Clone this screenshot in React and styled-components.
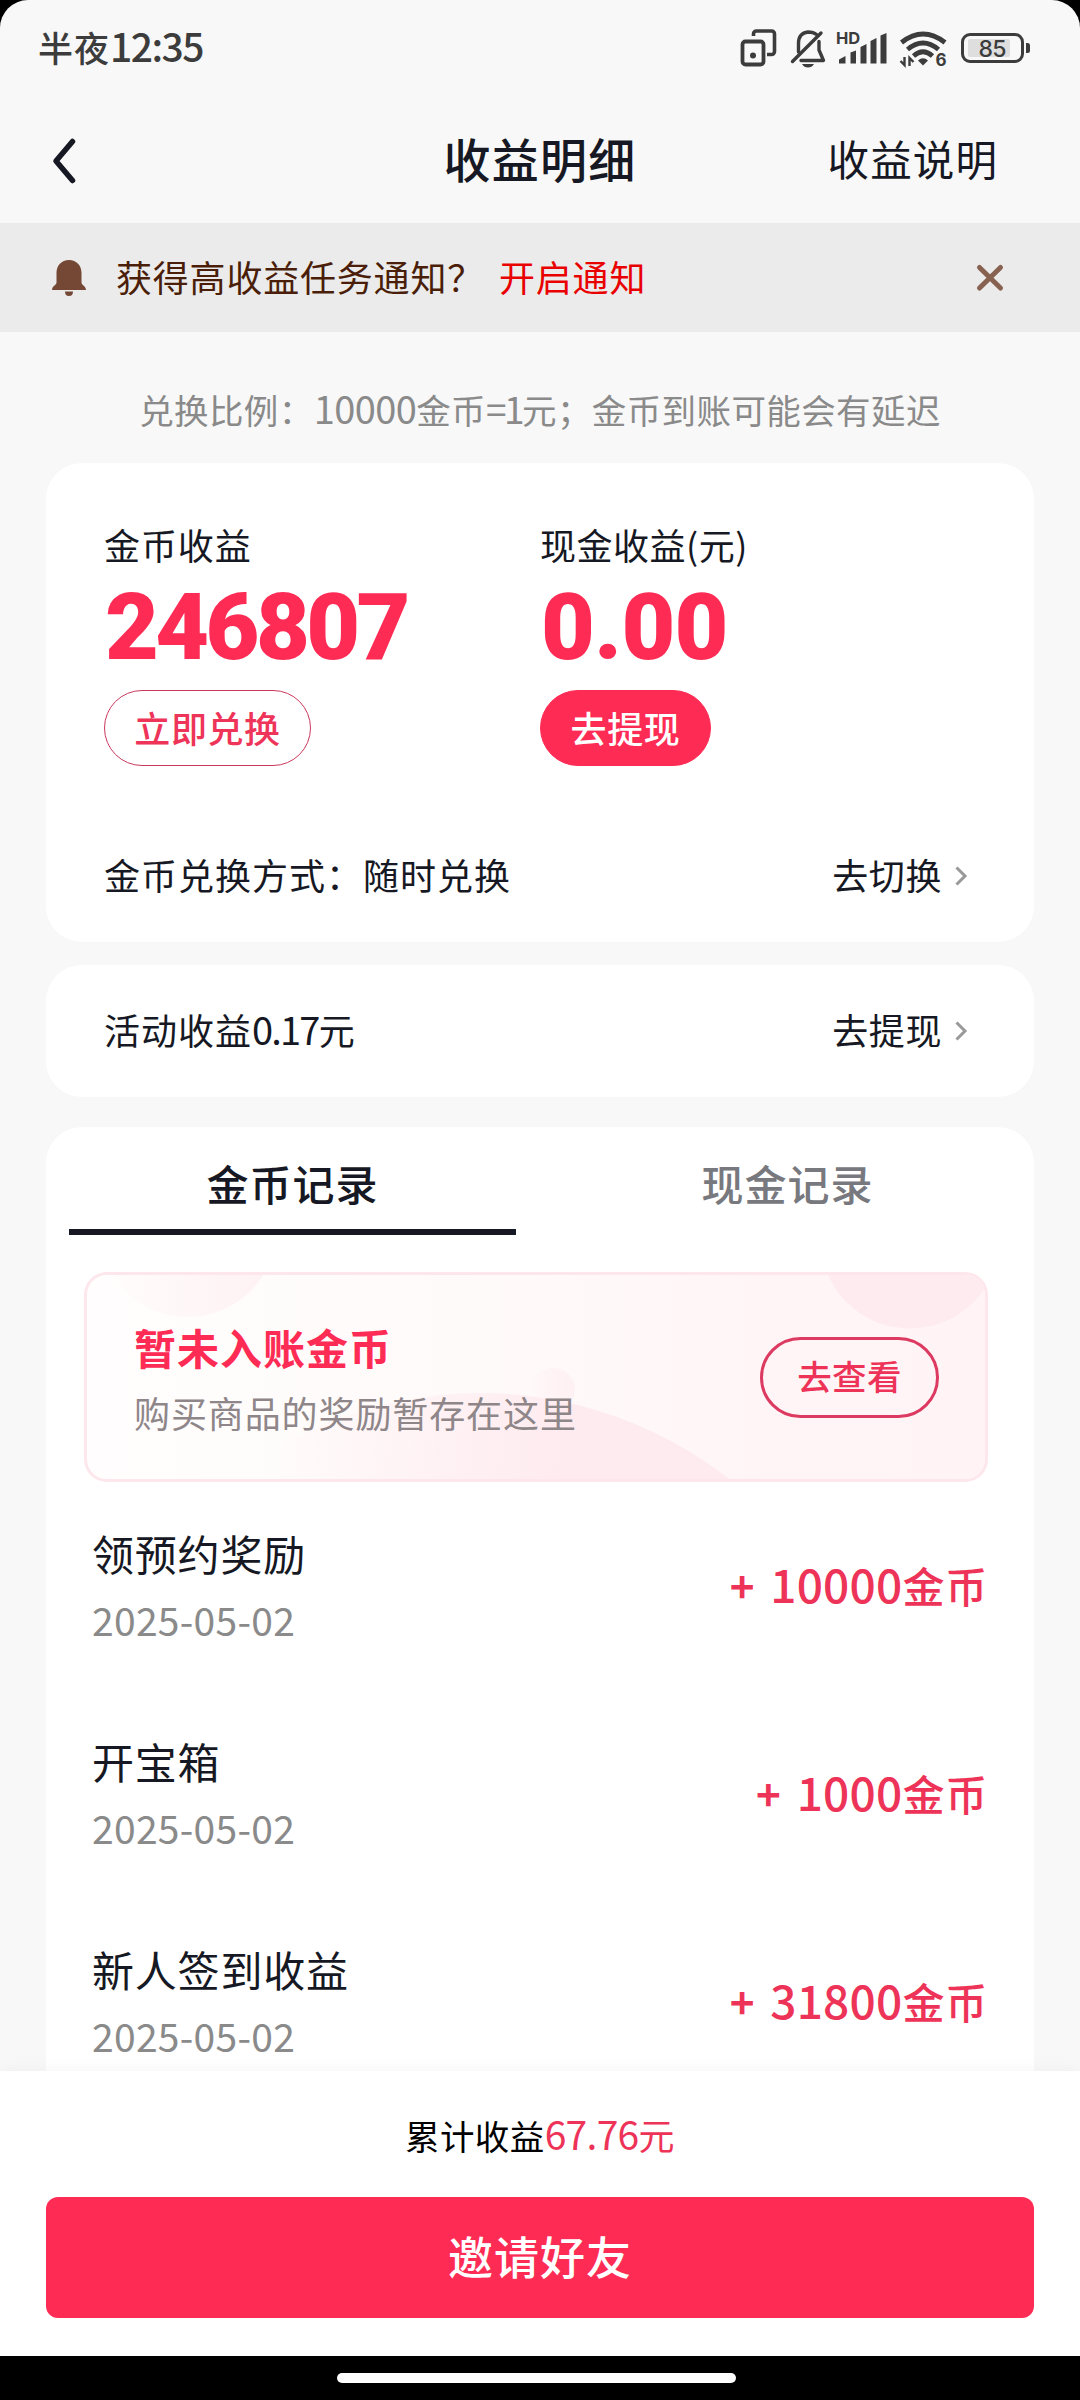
import React from 'react'
import styled, { createGlobalStyle } from 'styled-components'

const GlobalStyle = createGlobalStyle`
  *{
    box-sizing: border-box;
    margin: 0;
    padding: 0;
  }

  body{
    background-color: #000;
    font-family: "Noto Sans CJK SC", "Noto Sans", sans-serif;
    color: #161823;
  }

  button{
    font-family: inherit;
    background: none;
    border: none;
    white-space: nowrap;
  }

  svg{
    display: block;
    flex: none;
  }
`

const Page = styled.main`
  width: 1080px;
  height: 2400px;
  display: flex;
  flex-direction: column;
  background-color: #f8f8f8;
  border-radius: 28px 28px 0 0;
  overflow: hidden;
`

/* latin digits run a bit larger than the chinese text beside them */
const Num = styled.span`
  font-size: ${({ $size }) => $size}px;
  letter-spacing: ${({ $gap }) => $gap || 0}px;
  line-height: 1;
`

const StatusBar = styled.div`
  height: 98px;
  flex: none;
  padding: 0 50px 2px 38px;
  display: flex;
  align-items: center;
  justify-content: space-between;
  color: #3c3c3c;
`

const Clock = styled.span`
  font-size: 35px;
  font-weight: 500;
  letter-spacing: 1px;
  line-height: 50px;
  margin-top: -2px;
`

const Header = styled.header`
  height: 125px;
  flex: none;
  padding: 0 82px 0 50px;
  display: grid;
  grid-template-columns: 1fr auto 1fr;
  align-items: center;

  h1{
    font-size: 47px;
    font-weight: 500;
    letter-spacing: 1.2px;
    line-height: 60px;
    padding-left: 32px;
    margin-top: -6px;
  }

  button{
    justify-self: end;
    font-size: 41.5px;
    letter-spacing: 1.1px;
    line-height: 60px;
    color: #161823;
    margin-top: -6px;
  }
`

const Notice = styled.section`
  height: 109px;
  flex: none;
  padding: 0 74px 0 50px;
  display: flex;
  align-items: center;
  background-color: #ebebeb;
  font-size: 36px;
  letter-spacing: 0.8px;
  color: #4a1e08;

  p{
    margin: -4px 0 0 28px;
    flex: 1;
  }

  em{
    font-style: normal;
    color: #e90000;
    margin-left: 15px;
  }
`

const Content = styled.div`
  flex: 1;
  min-height: 0;
  overflow: hidden;
  padding: 0 46px;
  display: flex;
  flex-direction: column;
`

const Rate = styled.p`
  height: 131px;
  flex: none;
  padding-top: 49px;
  text-align: center;
  font-size: 34.5px;
  letter-spacing: 0.4px;
  line-height: 56px;
  color: #8a8a8a;
  white-space: nowrap;
`

const Card = styled.section`
  flex: none;
  height: ${({ $h }) => $h}px;
  margin-bottom: ${({ $gap }) => $gap || 0}px;
  background-color: #fff;
  border-radius: 36px;
`

const Balances = styled.div`
  display: grid;
  grid-template-columns: 436px 1fr;
  padding: 56px 58px 0;
  height: 347px;
`

const Balance = styled.div`
  display: flex;
  flex-direction: column;
  align-items: flex-start;

  h2{
    font-size: 36px;
    font-weight: 400;
    letter-spacing: ${({ $cash }) => ($cash ? 0.5 : 0.9)}px;
    line-height: 50px;
  }

  strong{
    font-family: Roboto, sans-serif;
    font-size: 93px;
    font-weight: 900;
    letter-spacing: ${({ $cash }) => ($cash ? -0.8 : -3.6)}px;
    line-height: 100px;
    color: #fe2c55;
    margin: 9px 0 0 1px;
  }
`

const Pill = styled.button`
  width: ${({ $w }) => $w}px;
  height: 76px;
  margin-top: 12px;
  padding-bottom: 3px;
  border-radius: 38px;
  border: 1px solid ${({ $solid }) => ($solid ? '#fe2c55' : '#c9385c')};
  background-color: ${({ $solid }) => ($solid ? '#fe2c55' : '#fff')};
  color: ${({ $solid }) => ($solid ? '#fff' : '#ee3458')};
  font-size: 36px;
  font-weight: 500;
  letter-spacing: 0.6px;
`

const LinkRow = styled.div`
  height: 132px;
  padding: 0 66px 4px 58px;
  display: flex;
  align-items: center;
  justify-content: space-between;
  font-size: 36px;
  letter-spacing: 1px;
`

const RowLink = styled.a`
  display: flex;
  align-items: center;
  gap: 12px;
  letter-spacing: 0.6px;

  svg{
    margin-top: 4px;
  }
`

const Tabs = styled.div`
  display: flex;
  padding: 0 23px;
  height: 108px;
`

const Tab = styled.button`
  flex: 1;
  height: 108px;
  padding: 9px 0 0;
  border-bottom: 6px solid ${({ $active }) => ($active ? '#161823' : 'transparent')};
  margin-left: ${({ $active }) => ($active ? 0 : 48)}px;
  color: ${({ $active }) => ($active ? '#161823' : '#78797e')};
  font-size: 42px;
  font-weight: 500;
  letter-spacing: 1px;
`

const Banner = styled.div`
  position: relative;
  width: 904px;
  height: 210px;
  margin: 37px 0 0 38px;
  padding: 0 46px 0 47px;
  display: flex;
  align-items: center;
  justify-content: space-between;
  border: 3px solid #fde7ec;
  border-radius: 23px;
  overflow: hidden;
`

const BannerArt = styled.svg`
  position: absolute;
  top: -3px;
  left: -3px;
`

const BannerText = styled.div`
  position: relative;

  h3{
    font-size: 42px;
    font-weight: 700;
    letter-spacing: 1px;
    line-height: 62px;
    color: #fe2c55;
    margin-top: 1px;
  }

  p{
    font-size: 36px;
    letter-spacing: 0.9px;
    line-height: 56px;
    color: #8e8689;
    margin-top: 6px;
  }
`

const CheckButton = styled.button`
  position: relative;
  width: 179px;
  height: 81px;
  padding-bottom: 4px;
  border: 3px solid #dc3a60;
  border-radius: 41px;
  color: #ee3358;
  font-size: 34.5px;
  font-weight: 500;
  letter-spacing: 0.4px;
`

const Records = styled.ul`
  list-style: none;
  padding: 0 46px 0 46px;
`

const Record = styled.li`
  height: 208px;
  display: flex;
  align-items: center;
  justify-content: space-between;

  h4{
    font-size: 42px;
    font-weight: 400;
    letter-spacing: 0.8px;
    line-height: 60px;
  }

  time{
    display: block;
    font-size: 39px;
    letter-spacing: 0.3px;
    line-height: 60px;
    margin-top: 6px;
    color: #8a8a8a;
  }
`

const Amount = styled.div`
  display: flex;
  align-items: baseline;
  font-size: 42px;
  font-weight: 500;
  letter-spacing: 0.8px;
  line-height: 60px;
  color: #ee3358;
  margin-top: -2px;

  i{
    font-style: normal;
    font-weight: 700;
    margin-right: 15px;
  }
`

const Footer = styled.footer`
  height: 285px;
  flex: none;
  padding: 0 46px;
  background-color: #fff;
  box-shadow: 0 -4px 14px rgba(0, 0, 0, 0.03);

  p{
    height: 126px;
    padding-top: 36px;
    text-align: center;
    font-size: 34.5px;
    letter-spacing: 0.4px;
    line-height: 54px;
    color: #000;
  }

  em{
    font-style: normal;
    font-size: 36px;
    color: #ee3358;
  }

  button{
    width: 100%;
    height: 121px;
    padding-bottom: 4px;
    border-radius: 12px;
    background-color: #fe2c55;
    color: #fff;
    font-size: 45px;
    font-weight: 500;
    letter-spacing: 1px;
  }
`

const NavBar = styled.div`
  height: 44px;
  flex: none;
  padding: 17px 0 0 337px;
  background-color: #000;

  div{
    width: 399px;
    height: 10px;
    border-radius: 5px;
    background-color: #fff;
  }
`

const StatusIcons = () => (
  <svg width="292" height="44" viewBox="738 26 292 44" fill="none" stroke="#3c3c3c">
    <path d="M753.5 36v-2a3 3 0 0 1 3-3h15a3 3 0 0 1 3 3v17.500a3 3 0 0 1-3 3h-4.500" strokeWidth="3.600" />
    <rect x="742.500" y="41.500" width="21" height="23" rx="3" strokeWidth="3.800" />
    <circle cx="753" cy="55.500" r="3" fill="#3c3c3c" stroke="none" />
    <path d="M798.500 52v-8.500q0-10.500 9.500-11.500q5.500 0 8.500 2.500M819 41.500v8.500l4.500 10.500H801" strokeWidth="3.400" strokeLinejoin="round" strokeLinecap="round" />
    <path d="M792.500 61.500L821 33" strokeWidth="3.400" strokeLinecap="round" />
    <path d="M802 64h12q-2 3.500-6 3.500t-6-3.500z" fill="#3c3c3c" stroke="none" />
    <text x="836" y="44" fill="#3c3c3c" stroke="none" fontFamily="Inter, sans-serif" fontSize="16.500" fontWeight="700">HD</text>
    <path d="M839 63.500v-4l6.500-3.500v7.500zM850.500 63.500v-11l5.500-2v13zM860.500 63.500V47l6-3v19.500zM870.500 63.500V41l6-3v25.500zM880.500 63.500V35.500l6-2.500v30.500z" fill="#3c3c3c" stroke="none" />
    <path d="M901.500 42.500Q923 25.500 945 42.500" strokeWidth="4.800" />
    <path d="M907.500 49.500Q923 36.500 938.500 49.500" strokeWidth="4.800" />
    <path d="M913.500 56Q923 47.500 932.500 56" strokeWidth="4.800" />
    <path d="M918 60.500q5-4.500 10 0l-5 5z" fill="#3c3c3c" stroke="none" />
    <path d="M904.500 57v8l-4-4M909.500 66v-8l4 4" strokeWidth="2.400" />
    <text x="935.500" y="66" fill="#3c3c3c" stroke="none" fontFamily="Inter, sans-serif" fontSize="17" fontWeight="700">6</text>
    <rect x="968" y="39" width="42" height="18" rx="2" fill="#dedede" stroke="none" />
    <rect x="962.500" y="34.500" width="60" height="27" rx="7.500" strokeWidth="3" />
    <path d="M1026 43h1.500a2.500 2.500 0 0 1 2.500 2.500v5a2.500 2.500 0 0 1-2.500 2.500H1026z" fill="#3c3c3c" stroke="none" />
    <text x="992.500" y="56.500" textAnchor="middle" fill="#3c3c3c" stroke="none" fontFamily="Inter, sans-serif" fontSize="23" fontWeight="500" textLength="28">85</text>
  </svg>
)

const BackIcon = () => (
  <svg width="28" height="48" viewBox="0 0 28 48" fill="none" stroke="#161823" strokeWidth="5.500" strokeLinecap="round" strokeLinejoin="round">
    <path d="M22.500 4.500L6 24l16.500 19.500" />
  </svg>
)

const BellIcon = () => (
  <svg width="38" height="38" viewBox="0 0 38 38" fill="#744834">
    <path d="M19 1c-7.500 0-12.500 5.500-12.500 13v9.500c0 2.500-4.500 3.500-4.500 7.500h34c0-4-4.500-5-4.500-7.500V14C31.500 6.500 26.500 1 19 1z" />
    <path d="M15 32.500h8q0 4.500-4 4.500t-4-4.500z" />
  </svg>
)

const CloseIcon = () => (
  <svg width="32" height="30" viewBox="0 0 32 30" fill="none" stroke="#886251" strokeWidth="5" strokeLinecap="round">
    <path d="M5.500 4.500l21 20.500M26.500 4.500l-21 20.500" />
  </svg>
)

const Arrow = () => (
  <svg width="14" height="20" viewBox="0 0 14 20" fill="none" stroke="#999" strokeWidth="3">
    <path d="M2.500 1.500L11 10l-8.500 8.500" />
  </svg>
)

const BannerShapes = () => (
  <BannerArt width="904" height="210" viewBox="0 0 904 210">
    <defs>
      <linearGradient id="base">
        <stop offset="0" stopColor="#fffdfd" />
        <stop offset="0.450" stopColor="#fffafa" />
        <stop offset="0.750" stopColor="#fff5f7" />
        <stop offset="1" stopColor="#fff3f5" />
      </linearGradient>
      <linearGradient id="left">
        <stop offset="0" stopColor="#fef1f3" stopOpacity="0" />
        <stop offset="1" stopColor="#fef1f3" />
      </linearGradient>
      <linearGradient id="hill" gradientUnits="userSpaceOnUse" x1="190" y1="170" x2="480" y2="200">
        <stop offset="0" stopColor="#feebef" stopOpacity="0" />
        <stop offset="1" stopColor="#feebef" />
      </linearGradient>
      <linearGradient id="dot">
        <stop offset="0" stopColor="#feebef" stopOpacity="0" />
        <stop offset="1" stopColor="#fef1f3" />
      </linearGradient>
    </defs>
    <rect width="904" height="210" fill="url(#base)" />
    <circle cx="104" cy="-43" r="88" fill="url(#left)" />
    <circle cx="826" cy="-33" r="89.500" fill="#feebef" />
    <circle cx="469" cy="118" r="22" fill="url(#dot)" />
    <circle cx="396" cy="525" r="404" fill="url(#hill)" />
    <rect x="1.500" y="1.500" width="901" height="207" rx="21.500" fill="none" stroke="#fde7ec" strokeWidth="3" />
  </BannerArt>
)

const records = [
  { title: '领预约奖励', date: '2025-05-02', amount: '10000' },
  { title: '开宝箱', date: '2025-05-02', amount: '1000' },
  { title: '新人签到收益', date: '2025-05-02', amount: '31800' },
]

const App = () => {
  return (
    <>
      <GlobalStyle />
      <Page>
        <StatusBar>
          <Clock>半夜<Num $size={39} $gap={-1.5}>12:35</Num></Clock>
          <StatusIcons />
        </StatusBar>
        <Header>
          <BackIcon />
          <h1>收益明细</h1>
          <button>收益说明</button>
        </Header>
        <Notice>
          <BellIcon />
          <p>获得高收益任务通知？<em>开启通知</em></p>
          <CloseIcon />
        </Notice>

        <Content>
          <Rate>
            兑换比例：<Num $size={38} $gap={-0.6}>10000</Num>金币<Num $size={37} $gap={-2.5}>=1</Num>元；金币到账可能会有延迟
          </Rate>

          <Card $h={479} $gap={23}>
            <Balances>
              <Balance>
                <h2>金币收益</h2>
                <strong>246807</strong>
                <Pill $w={207}>立即兑换</Pill>
              </Balance>
              <Balance $cash>
                <h2>现金收益(元)</h2>
                <strong>0.00</strong>
                <Pill $w={171} $solid>去提现</Pill>
              </Balance>
            </Balances>
            <LinkRow>
              <p>金币兑换方式：随时兑换</p>
              <RowLink>去切换<Arrow /></RowLink>
            </LinkRow>
          </Card>

          <Card $h={132} $gap={30}>
            <LinkRow>
              <p>活动收益<Num $size={38} $gap={-1.8}>0.17</Num>元</p>
              <RowLink>去提现<Arrow /></RowLink>
            </LinkRow>
          </Card>

          <Card $h={1100}>
            <Tabs>
              <Tab $active>金币记录</Tab>
              <Tab>现金记录</Tab>
            </Tabs>
            <Banner>
              <BannerShapes />
              <BannerText>
                <h3>暂未入账金币</h3>
                <p>购买商品的奖励暂存在这里</p>
              </BannerText>
              <CheckButton>去查看</CheckButton>
            </Banner>
            <Records>
              {records.map((item) => (
                <Record key={item.title}>
                  <div>
                    <h4>{item.title}</h4>
                    <time>{item.date}</time>
                  </div>
                  <Amount>
                    <i>+</i>
                    <Num $size={46} $gap={0.2}>{item.amount}</Num>
                    金币
                  </Amount>
                </Record>
              ))}
            </Records>
          </Card>
        </Content>

        <Footer>
          <p>累计收益<em><Num $size={39} $gap={-0.7}>67.76</Num>元</em></p>
          <button>邀请好友</button>
        </Footer>
        <NavBar><div /></NavBar>
      </Page>
    </>
  )
}

export default App
